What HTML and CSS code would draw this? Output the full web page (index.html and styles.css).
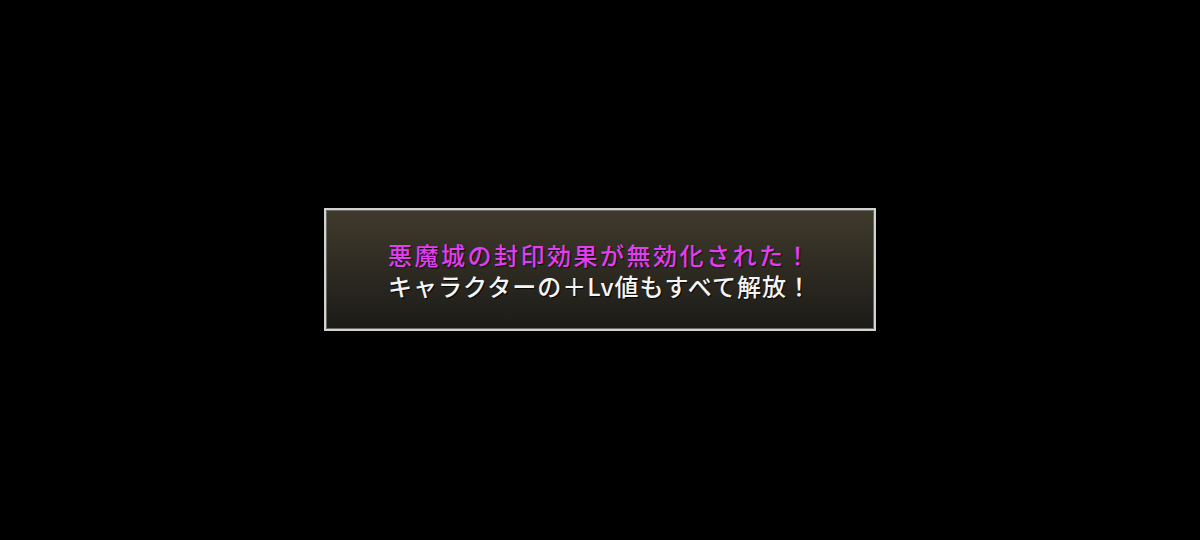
FILE: index.html
```html
<!DOCTYPE html>
<html lang="ja">
<head>
<meta charset="utf-8">
<link rel="stylesheet" href="styles.css">
</head>
<body>
<div class="stage">
  <div class="dialog">
    <p class="line pink">悪魔城の封印効果が無効化された！</p>
    <p class="line white">キャラクターの＋Lv値もすべて解放！</p>
  </div>
</div>
</body>
</html>
```
FILE: styles.css
```css
html, body {
  margin: 0;
  padding: 0;
  background: #000;
}
.stage {
  width: 1200px;
  height: 540px;
  display: flex;
  align-items: center;
  justify-content: center;
}
.dialog {
  box-sizing: border-box;
  width: 552px;
  height: 123px;
  margin-top: -1px;
  border: 2px solid #d2d2d2;
  box-shadow: inset 0 0 0 1px #6a6a62;
  background: linear-gradient(to bottom, #3f3a2b 0%, #2c2921 55%, #1c1b18 100%);
  display: flex;
  flex-direction: column;
  align-items: center;
  justify-content: center;
  font-family: "Noto Sans CJK JP", "Noto Sans", sans-serif;
}
.line {
  margin: 0;
  font-size: 24px;
  line-height: 31px;
  text-shadow: 1px 1px 1px rgba(0,0,0,0.85);
}
.pink {
  color: #e23ef0;
  font-weight: 500;
  letter-spacing: 2.5px;
}
.white {
  color: #f4f4f4;
  font-weight: 500;
  letter-spacing: 1px;
}
```
